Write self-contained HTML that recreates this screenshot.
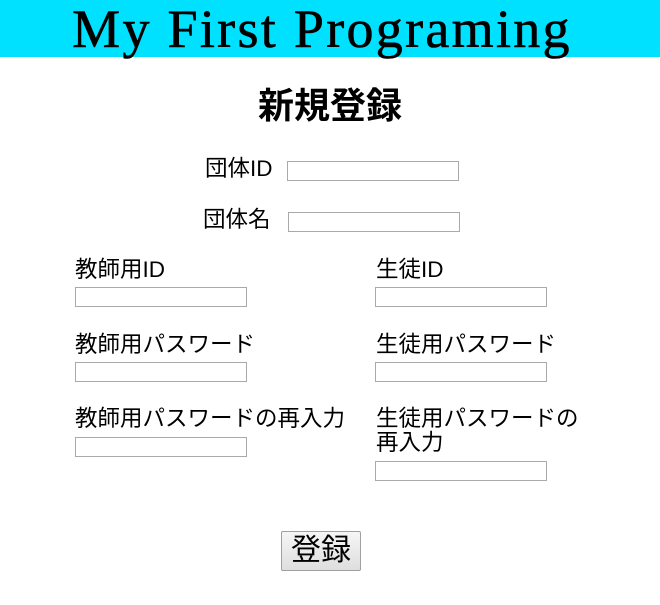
<!DOCTYPE html>
<html><head><meta charset="utf-8"><style>
body{margin:0;width:660px;height:605px;background:#fff;position:relative;font-family:"Liberation Sans","Noto Sans CJK JP",sans-serif;color:#000;overflow:hidden}
.hd{position:absolute;left:0;top:0;width:660px;height:57px;background:#00e1ff}
.hd div{position:absolute;left:-8px;width:660px;top:2px;text-align:center;font-family:"Liberation Serif","Noto Serif CJK SC",serif;font-size:54px;line-height:54px;letter-spacing:2.3px;-webkit-text-stroke:0.6px #000}
.t{position:absolute;font-size:22.5px;line-height:24px;white-space:nowrap}
.i{position:absolute;width:170px;height:18px;border:1px solid #a9a9a9;background:#fff}
h1{position:absolute;margin:0;left:0;width:660px;text-align:center;top:86px;font-size:36px;line-height:40px;font-weight:bold}
.b{position:absolute;left:281px;top:531px;width:78px;height:38px;border:1px solid #a0a0a0;border-radius:2px;background:linear-gradient(#f6f6f6,#dedede);font-size:30px;line-height:38px;text-align:center}
</style></head><body>
<div class="hd"><div>My First Programing</div></div>
<h1>新規登録</h1>
<div class="t" style="left:205px;top:157px">団体ID</div><div class="i" style="left:287px;top:161px"></div>
<div class="t" style="left:203px;top:208px">団体名</div><div class="i" style="left:288px;top:212px"></div>
<div class="t" style="left:75px;top:258px">教師用ID</div><div class="i" style="left:75px;top:287px"></div>
<div class="t" style="left:376px;top:258px">生徒ID</div><div class="i" style="left:375px;top:287px"></div>
<div class="t" style="left:75px;top:333px">教師用パスワード</div><div class="i" style="left:75px;top:362px"></div>
<div class="t" style="left:376px;top:333px">生徒用パスワード</div><div class="i" style="left:375px;top:362px"></div>
<div class="t" style="left:75px;top:407px">教師用パスワードの再入力</div><div class="i" style="left:75px;top:437px"></div>
<div class="t" style="left:376px;top:407px">生徒用パスワードの<br>再入力</div><div class="i" style="left:375px;top:461px"></div>
<div class="b">登録</div>
</body></html>
